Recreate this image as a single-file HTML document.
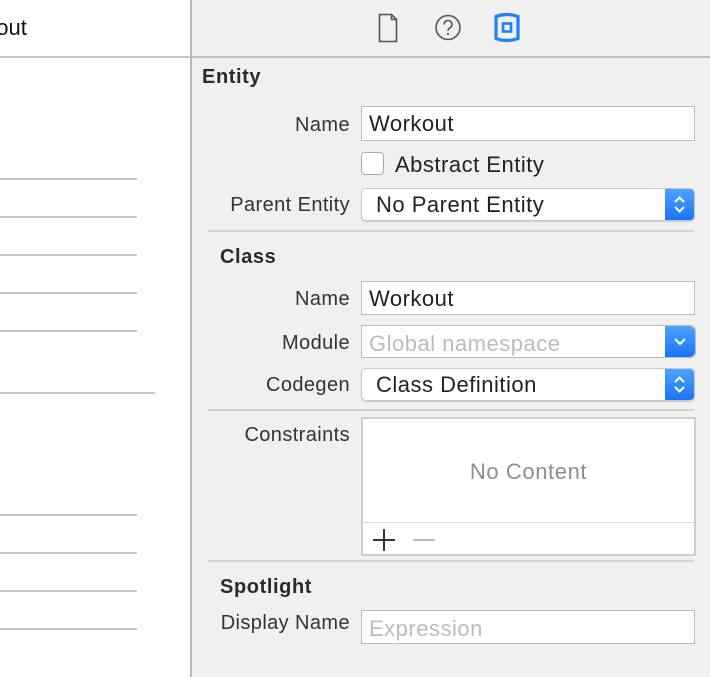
<!DOCTYPE html>
<html><head><style>
*{margin:0;padding:0;box-sizing:border-box}
body{width:710px;height:677px;overflow:hidden;position:relative;background:#f0f0f0;font-family:"Liberation Sans",sans-serif;color:#222}
.a{position:absolute}
.left{left:0;top:0;width:190px;height:677px;background:#fff}
.hl{height:2px;background:#c8c8c8}
.lbl{position:absolute;font-size:20px;letter-spacing:0.4px;text-align:right;right:360px;line-height:22px;color:#333;white-space:nowrap}
.in{position:absolute;left:361px;width:334px;background:#fff;border:1px solid #bdbdbd;font-size:22px;letter-spacing:0.5px;padding-left:7px;line-height:34px;color:#222;white-space:nowrap}
.pop{position:absolute;left:361px;width:334px;background:#fff;border:1px solid #c8c8c8;border-radius:5px;font-size:22px;letter-spacing:0.5px;padding-left:14px;line-height:32px;box-shadow:0 1px 1px rgba(0,0,0,.15);overflow:hidden;white-space:nowrap}
.pop .b{position:absolute;right:0;top:0;bottom:0;width:29px;background:linear-gradient(#4fa3ff,#1b74f5)}
.h{position:absolute;font-size:20px;letter-spacing:0.6px;font-weight:bold;color:#2a2a2a}
.sep{position:absolute;left:208px;width:486px;height:2px;background:#d2d2d2}
</style></head><body>
<div class="a left"></div>
<div class="a" style="left:-16px;top:15px;font-size:22px;color:#111">bout</div>
<div class="a" style="left:-16px;top:12px;width:16px;height:30px;background:#fff"></div>
<div class="a hl" style="left:0;top:56px;width:710px"></div>
<div class="a" style="left:190px;top:0;width:2px;height:677px;background:#b8b8b8"></div>
<div class="a" style="left:192px;top:0;width:518px;height:56px;background:#f0f0f0"></div>
<div class="a hl" style="left:192px;top:56px;width:518px;background:#c2c2c2"></div>
<div class="a hl" style="left:0;top:178px;width:137px"></div>
<div class="a hl" style="left:0;top:216px;width:137px"></div>
<div class="a hl" style="left:0;top:254px;width:137px"></div>
<div class="a hl" style="left:0;top:292px;width:137px"></div>
<div class="a hl" style="left:0;top:330px;width:137px"></div>
<div class="a hl" style="left:0;top:392px;width:155px"></div>
<div class="a hl" style="left:0;top:514px;width:137px"></div>
<div class="a hl" style="left:0;top:552px;width:137px"></div>
<div class="a hl" style="left:0;top:590px;width:137px"></div>
<div class="a hl" style="left:0;top:628px;width:137px"></div>

<svg class="a" style="left:372px;top:10px" width="150" height="36" viewBox="0 0 150 36">
<path d="M7.5 4.5h12l5 5v22h-17z M19.5 4.5v5h5" fill="none" stroke="#555" stroke-width="1.6"/>
<circle cx="76" cy="17.5" r="12" fill="none" stroke="#555" stroke-width="1.6"/>
<path d="M72 14.5a4 4 0 1 1 5.5 3.7c-1.2.5-1.5 1.3-1.5 2.6" fill="none" stroke="#555" stroke-width="1.6"/>
<circle cx="76" cy="24" r="1.1" fill="#555"/>
<path d="M124 6.5q11-4 22 0v22q-11 4-22 0z" fill="none" stroke="#1a82fb" stroke-width="3.2"/>
<rect x="131" y="13.5" width="8" height="8" fill="none" stroke="#1a82fb" stroke-width="2.6"/>
</svg>

<div class="h" style="left:202px;top:66px">Entity</div>
<div class="lbl" style="top:114px">Name</div>
<div class="in" style="top:106px;height:35px">Workout</div>
<div class="a" style="left:361px;top:152px;width:23px;height:23px;background:#fff;border:1px solid #aaa;border-radius:4px"></div>
<div class="a" style="left:395px;top:152px;font-size:22px;letter-spacing:0.5px">Abstract Entity</div>
<div class="lbl" style="top:194px">Parent Entity</div>
<div class="pop" style="top:188px;height:33px">No Parent Entity<div class="b"><svg width="29" height="31"><path d="M10 13l4.5-4.5 4.5 4.5M10 18l4.5 4.5 4.5-4.5" fill="none" stroke="#fff" stroke-width="2"/></svg></div></div>
<div class="sep" style="top:230px"></div>

<div class="h" style="left:220px;top:246px">Class</div>
<div class="lbl" style="top:288px">Name</div>
<div class="in" style="top:281px;height:34px">Workout</div>
<div class="lbl" style="top:332px">Module</div>
<div class="in" style="top:325px;height:33px;width:335px;color:#bcbcbc;border-radius:0 5px 5px 0;line-height:36px">Global namespace<div class="a" style="right:0;top:0;bottom:0;width:30px;background:linear-gradient(#4fa3ff,#1b74f5);border-radius:0 5px 5px 0"><svg width="30" height="31"><path d="M10 13l5 5 5-5" fill="none" stroke="#fff" stroke-width="2"/></svg></div></div>
<div class="lbl" style="top:374px">Codegen</div>
<div class="pop" style="top:368px;height:33px">Class Definition<div class="b"><svg width="29" height="31"><path d="M10 13l4.5-4.5 4.5 4.5M10 18l4.5 4.5 4.5-4.5" fill="none" stroke="#fff" stroke-width="2"/></svg></div></div>
<div class="sep" style="top:409px"></div>

<div class="lbl" style="top:424px">Constraints</div>
<div class="a" style="left:361px;top:417px;width:335px;height:139px;background:#fff;border:2px solid #cfcfcf">
<div class="a" style="left:0;right:0;top:40px;text-align:center;font-size:22px;letter-spacing:0.6px;color:#8e8e8e">No Content</div>
<div class="a" style="left:0;right:0;top:103px;height:1px;background:#ddd"></div>
<div class="a" style="left:10px;top:120px;width:22px;height:2px;background:#333"></div>
<div class="a" style="left:20px;top:110px;width:2px;height:22px;background:#333"></div>
<div class="a" style="left:50px;top:120px;width:22px;height:2px;background:#bbb"></div>
</div>
<div class="sep" style="top:560px"></div>

<div class="h" style="left:220px;top:576px">Spotlight</div>
<div class="lbl" style="top:612px">Display Name</div>
<div class="in" style="top:610px;height:34px;color:#bcbcbc;line-height:36px">Expression</div>
</body></html>
